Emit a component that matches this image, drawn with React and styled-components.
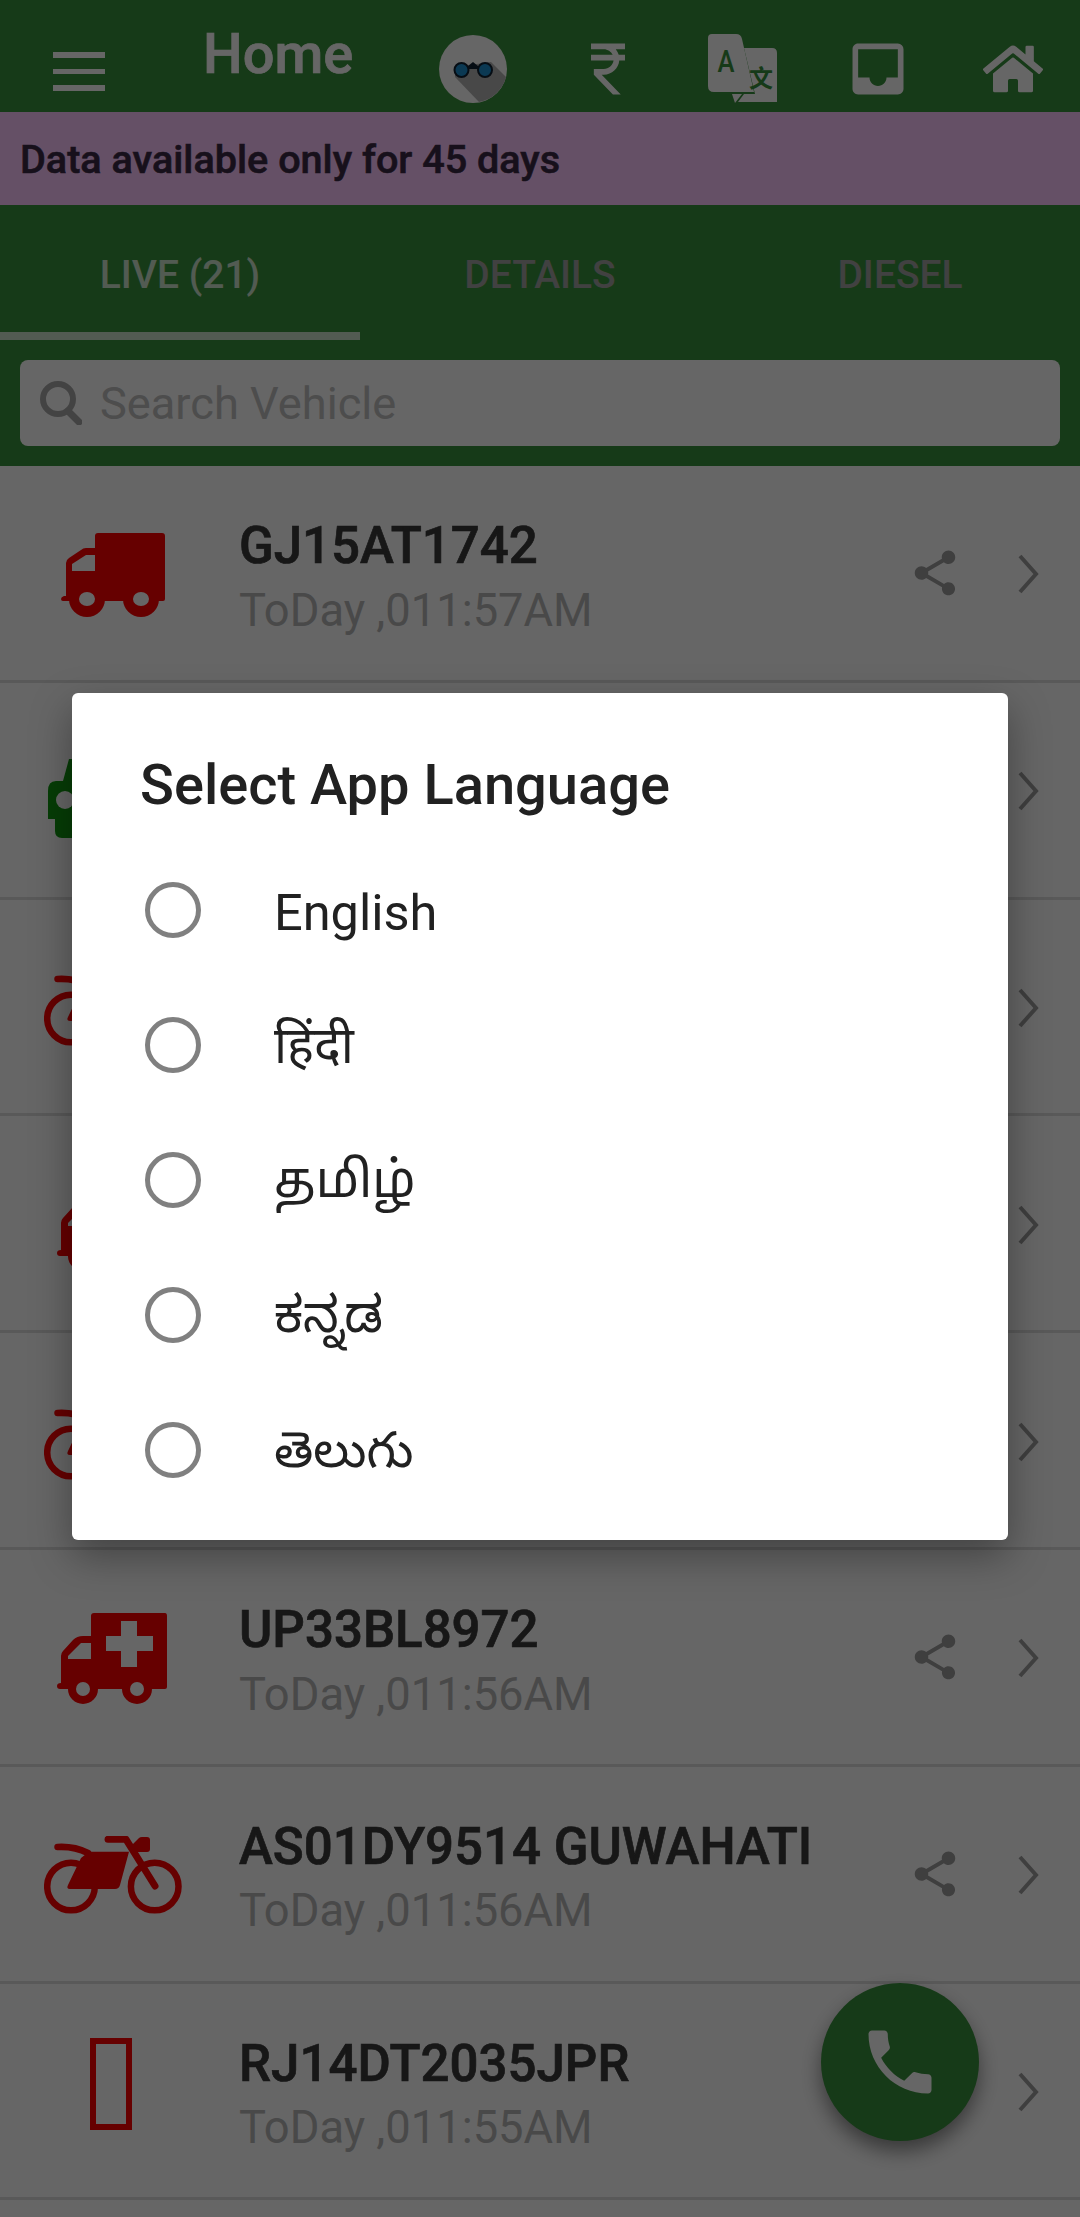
import React from "react";
import styled, { createGlobalStyle } from "styled-components";
import { MdInbox, MdShare, MdCurrencyRupee, MdPhone } from "react-icons/md";
import { FaHome } from "react-icons/fa";

const Global = createGlobalStyle`
  html, body { margin: 0; padding: 0; background: #fff; }
  #root { width: 1080px; height: 2217px; }
  * { box-sizing: border-box; }
`;
const GREEN = "#39913c";
const RED = "#ff0000";
const Page = styled.div`
  position: relative; width: 1080px; height: 2217px; overflow: hidden; background: #fff;
  font-family: Roboto, "Noto Sans", sans-serif;
`;
const Header = styled.header`
  height: 112px; background: ${GREEN}; color: #fff; display: flex; align-items: flex-start;
`;
const MenuCell = styled.div`
  width: 203px; height: 112px; padding: 52px 0 0 53px; display: flex; flex-direction: column; gap: 11px;
`;
const MenuBar = styled.span`display: block; width: 52px; height: 5.5px; background: #fff;`;
const HomeTitle = styled.div`
  width: 202px; font-size: 56px; font-weight: 500; line-height: 60px; margin-top: 24px; color: #fff;
  -webkit-text-stroke: 0.7px #fff;
`;
const IconStrip = styled.div`display: flex; height: 112px;`;
const IconCell = styled.div`
  width: 135px; height: 137px; display: flex; align-items: center; justify-content: center; color: #fff;
`;
const Banner = styled.div`
  height: 93px; background: #fdc8ff; color: #3a2a44; padding: 2px 0 0 20px; display: flex; align-items: center;
  font-size: 39.6px; font-weight: 500; -webkit-text-stroke: 0.6px #3a2a44;
`;
const TabBar = styled.div`display: flex; height: 135px; background: ${GREEN};`;
const Tab = styled.div`
  width: 360px; height: 135px; display: flex; align-items: center; justify-content: center; padding-top: 12px;
  font-size: 39px; font-weight: 500; color: ${p => (p.$on ? "#ffffff" : "#a3a3a3")};
  opacity: ${p => (p.$on ? 0.75 : 1)};
  border-bottom: 8px solid ${p => (p.$on ? "#ffffff" : "transparent")};
`;
const SearchWrap = styled.div`height: 126px; background: ${GREEN}; padding: 20px 20px 0;`;
const SearchBox = styled.div`
  height: 86px; background: #fff; border-radius: 8px; display: flex; align-items: center; padding-left: 20px;
  color: #c0c0c0; font-size: 45.2px; gap: 18px;
`;
const SearchGlyph = styled.svg`flex: none; width: 42px; height: 44px;`;
const List = styled.div`display: flex; flex-direction: column;`;
const Row = styled.div`
  height: 216.8px; border-bottom: 3px solid #dfdfdf; display: flex; align-items: center; background: #fff;
`;
const IconSlot = styled.div`
  width: 239px; padding: ${p => p.$pad}px ${p => p.$right}px 0 0; display: flex; justify-content: center; flex: none;
`;
const Texts = styled.div`flex: 1; display: flex; flex-direction: column; gap: 11.5px; min-width: 0; padding-top: 10px;`;
const Plate = styled.div`
  font-size: 51px; font-weight: 500; line-height: 54px; color: #3a3a3a; -webkit-text-stroke: 0.7px #3a3a3a;
`;
const Stamp = styled.div`font-size: 45.3px; line-height: 52px; color: #b6b6b6;`;
const ShareBtn = styled(MdShare)`color: #9e9e9e; flex: none; margin: 0 55px 0 0;`;
const ChevronGlyph = styled.svg`flex: none; width: 22px; height: 42px; margin: 3px 41px 0 0;`;
const Fab = styled.div`
  position: absolute; left: 821px; top: 1983px; width: 158px; height: 158px; border-radius: 50%;
  background: ${GREEN}; color: #fff; display: flex; align-items: center; justify-content: center;
  box-shadow: 0 10px 20px rgba(0,0,0,.45);
`;
const Scrim = styled.div`
  position: absolute; inset: 0; background: rgba(0,0,0,.6); display: flex; justify-content: center; align-items: flex-start;
  padding-top: 693px;
`;
const Modal = styled.div`
  width: 936px; height: 847px; background: #fff; border-radius: 6px; padding: 0 0 23px;
  box-shadow: 0 16px 40px rgba(0,0,0,.35); color: #212121;
`;
const ModalTitle = styled.div`
  height: 149.5px; padding: 58px 0 0 68px; font-size: 56px; font-weight: 500; line-height: 68px;
`;
const Option = styled.div`height: 135px; display: flex; align-items: center; padding-left: 73px;`;
const Radio = styled.span`
  width: 56px; height: 56px; border-radius: 50%; border: 5.5px solid #808080; flex: none; margin-right: 73px;
`;
const OptLabel = styled.span`
  font-family: Roboto, "Noto Sans", "Noto Sans Devanagari", "Noto Sans Tamil", "Noto Sans Kannada", "Noto Sans Telugu", "DejaVu Sans", sans-serif;
  font-size: 50.5px; line-height: 60px; padding-top: ${p => p.$nudge}px;
`;

const Binoculars = () => (
  <svg width="68" height="68" viewBox="0 0 68 68">
    <circle cx="34" cy="34" r="34" fill="#fff" />
    <path d="M16 42 L40 67 A34 34 0 0 0 67 42 L52 27 L16 32Z" fill="#b5b5b5" />
    <circle cx="22.5" cy="35" r="7" fill="#1d8fd0" stroke="#123" strokeWidth="2" />
    <circle cx="46" cy="35" r="7" fill="#1d8fd0" stroke="#123" strokeWidth="2" />
    <path d="M29 31 L34 27 L39 31 L39 34 L29 34Z" fill="#123" />
  </svg>
);
const Translate = () => (
  <svg width="70" height="70" viewBox="0 0 70 70">
    <path d="M4 0 H28 Q33 0 34 5 L46 58 H6 Q0 58 0 52 V4 Q0 0 4 0Z" fill="#fff" />
    <path d="M36 14 H64 Q69 14 69 19 V68 H30 L36 60 H47 L36 14Z" fill="#fff" />
    <path d="M24 60 H34 L27 69 Z" fill="#fff" />
    <text x="18" y="38" fontFamily="Roboto" fontSize="32" fontWeight="500" fill={GREEN} textAnchor="middle" transform="translate(18 0) scale(0.8 1) translate(-18 0)">A</text>
    <text x="53" y="53" fontFamily="'Noto Sans CJK SC'" fontSize="24" fontWeight="700" fill={GREEN} textAnchor="middle">文</text>
  </svg>
);
const Truck = () => (
  <svg width="104" height="84" viewBox="0 0 104 84">
    <path d="M34 3 Q34 0 37 0 H101 Q104 0 104 3 V66 Q104 68 102 68 H2 Q0 68 0 66 Q0 64 3 63 H5 V30 Q5 27 8 25 L20 17 Q22 15 25 15 H34Z" fill={RED} />
    <path d="M34 22 H25 L11 31 V38 H34Z" fill="#fff" />
    <circle cx="26" cy="66" r="18" fill={RED} /><ellipse cx="26" cy="66" rx="8" ry="7" fill="#fff" />
    <circle cx="80" cy="66" r="18" fill={RED} /><ellipse cx="80" cy="66" rx="8" ry="7" fill="#fff" />
  </svg>
);
const Ambulance = () => (
  <svg width="111" height="91" viewBox="0 0 111 91">
    <path d="M34 3 Q34 0 37 0 H108 Q110 0 110 3 V74 Q110 76 108 76 H3 Q0 76 0 73 Q0 70 4 70 V43 Q4 40 6 38 L16 27 Q20 23 26 23 H34Z" fill={RED} />
    <path d="M34 30 H24 L11 43 V46 H34Z" fill="#fff" />
    <path d="M64 8 H80 V23 H96 V38 H80 V54 H64 V38 H49 V23 H64Z" fill="#fff" />
    <circle cx="26" cy="76" r="15" fill={RED} /><circle cx="26" cy="76" r="7" fill="#fff" />
    <circle cx="80" cy="76" r="15" fill={RED} /><circle cx="80" cy="76" r="7" fill="#fff" />
  </svg>
);
const Moto = () => (
  <svg width="138" height="78" viewBox="0 0 138 78">
    <circle cx="27" cy="50.5" r="23.8" fill="none" stroke={RED} strokeWidth="6.5" />
    <circle cx="110.7" cy="50.5" r="23.8" fill="none" stroke={RED} strokeWidth="6.5" />
    <path d="M45 15.7 H85 L76 49 Q75 53 71 53 H26 Q22 53 24 49 L37 22Z" fill={RED} />
    <path d="M13.5 11 Q30 10 44 17" fill="none" stroke={RED} strokeWidth="6.5" strokeLinecap="round" />
    <path d="M64 3.3 H82 L111 50" fill="none" stroke={RED} strokeWidth="7" strokeLinecap="round" strokeLinejoin="round" />
    <path d="M88 9 L95 2 Q96 1 98 1 H103 Q106 1 106 4 V13 Q106 16 103 16 H91Z" fill={RED} />
  </svg>
);
const Car = () => (
  <svg width="130" height="79" viewBox="0 0 130 79">
    <path d="M21 0 H109 L115 22 H122 Q130 22 130 32 V60 H123 V72 Q123 79 116 79 H14 Q7 79 7 72 V60 H0 V32 Q0 22 8 22 H15Z" fill="#0f9a0f" />
    <circle cx="17" cy="41" r="9" fill="#fff" />
    <circle cx="113" cy="41" r="9" fill="#fff" />
  </svg>
);
const Tofu = () => (
  <svg width="42" height="104" viewBox="0 0 42 104">
    <rect x="3" y="3" width="36" height="86" fill="none" stroke={RED} strokeWidth="6" />
  </svg>
);

const rows = [
  { icon: <Truck />, pad: 5, right: 14, plate: "GJ15AT1742", time: "ToDay ,011:57AM" },
  { icon: <Car />, pad: 18, right: 14 },
  { icon: <Moto />, pad: 2, right: 14 },
  { icon: <Ambulance />, pad: 4, right: 14 },
  { icon: <Moto />, pad: 2, right: 14 },
  { icon: <Ambulance />, pad: 4, right: 14, plate: "UP33BL8972", time: "ToDay ,011:56AM" },
  { icon: <Moto />, pad: 2, right: 14, plate: "AS01DY9514 GUWAHATI", time: "ToDay ,011:56AM" },
  { icon: <Tofu />, pad: 0, right: 17, plate: "RJ14DT2035JPR", time: "ToDay ,011:55AM" },
];
const langs = [["English", 5], ["हिंदी", 2], ["தமிழ்", 0], ["ಕನ್ನಡ", 0], ["తెలుగు", 0]];

export default function App() {
  return (
    <Page>
      <Global />
      <Header>
        <MenuCell><MenuBar /><MenuBar /><MenuBar /></MenuCell>
        <HomeTitle>Home</HomeTitle>
        <IconStrip>
          <IconCell><Binoculars /></IconCell>
          <IconCell><MdCurrencyRupee size={68} /></IconCell>
          <IconCell><Translate /></IconCell>
          <IconCell><MdInbox size={68} /></IconCell>
          <IconCell><FaHome size={60} /></IconCell>
        </IconStrip>
      </Header>
      <Banner>Data available only for 45 days</Banner>
      <TabBar>
        <Tab $on>LIVE (21)</Tab>
        <Tab>DETAILS</Tab>
        <Tab>DIESEL</Tab>
      </TabBar>
      <SearchWrap>
        <SearchBox>
          <SearchGlyph viewBox="0 0 42 44" fill="none" stroke="#a8a8a8" strokeWidth="6">
            <circle cx="18" cy="18" r="15" />
            <path d="M28 30 L39 41" strokeLinecap="round" strokeWidth="7" />
          </SearchGlyph>
          Search Vehicle
        </SearchBox>
      </SearchWrap>
      <List>
        {rows.map((r, i) => (
          <Row key={i}>
            <IconSlot $pad={r.pad} $right={r.right}>{r.icon}</IconSlot>
            <Texts>
              {r.plate && <Plate>{r.plate}</Plate>}
              {r.time && <Stamp>{r.time}</Stamp>}
            </Texts>
            <ShareBtn size={54} />
            <ChevronGlyph viewBox="0 0 22 42" fill="none" stroke="#9e9e9e" strokeWidth="4">
              <polyline points="3,3 19,21 3,39" />
            </ChevronGlyph>
          </Row>
        ))}
      </List>
      <Fab><MdPhone size={84} /></Fab>
      <Scrim>
        <Modal>
          <ModalTitle>Select App Language</ModalTitle>
          {langs.map(([l, n]) => (
            <Option key={l}><Radio /><OptLabel $nudge={n}>{l}</OptLabel></Option>
          ))}
        </Modal>
      </Scrim>
    </Page>
  );
}
